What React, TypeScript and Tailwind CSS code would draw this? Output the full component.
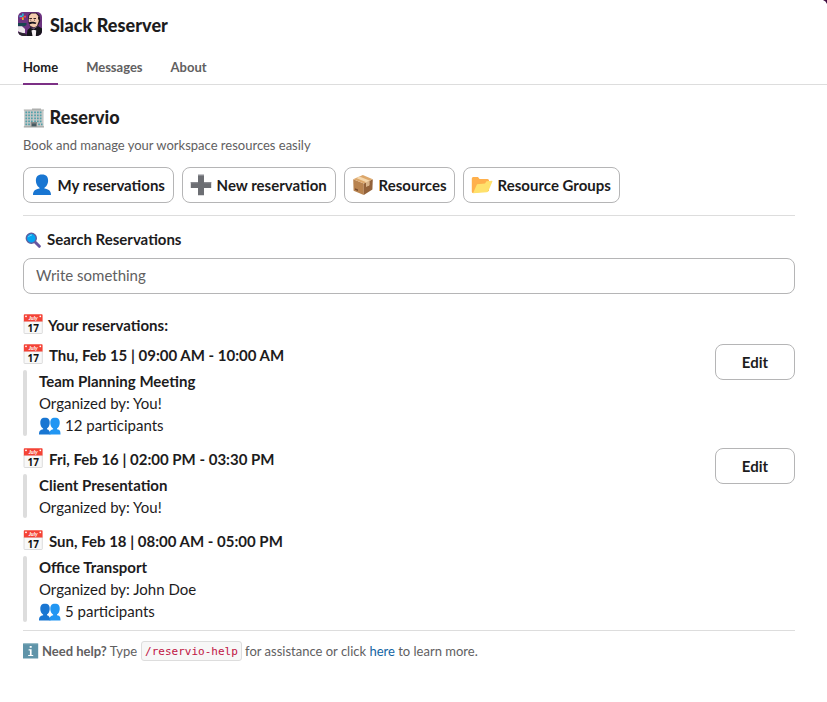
import type { ReactNode } from 'react'

function Calendar() {
  return (
    <svg viewBox="0 0 20 20" className="h-5 w-5 shrink-0">
      <path d="M1 7H19.300V18.800Q19.300 19.500 18.600 19.500H1.700Q1 19.500 1 18.800Z" fill="#f8f8f8" stroke="#cfcfcf" strokeWidth=".7" />
      <path d="M1.600 .3H18.800Q19.600 .3 19.600 1.100V7.600H.8V1.100Q.8 .3 1.600 .3Z" fill="#f44336" />
      <circle cx="3" cy="2.300" r=".9" fill="#fff" />
      <circle cx="17.300" cy="2.300" r=".9" fill="#fff" />
      <text x="10.200" y="5.800" textAnchor="middle" fontSize="5.4" fontWeight="700" fontStyle="italic" fill="#fff" fontFamily="Lato, sans-serif">July</text>
      <text x="10.200" y="17.500" textAnchor="middle" fontSize="11" fontWeight="700" fill="#111" fontFamily="Noto Sans, sans-serif" textLength="11.5" lengthAdjust="spacingAndGlyphs">17</text>
    </svg>
  )
}

function Person() {
  return (
    <svg viewBox="0 0 20 22" className="h-[22px] w-5 shrink-0">
      <path d="M1 21C1 16.500 3.500 15.200 7.600 14.500V12H12.400V14.500C16.500 15.200 19 16.500 19 21Z" fill="#1976d2" />
      <path d="M10 .5C14.500 .5 16.300 3.200 16.100 7C15.900 11 13.400 14.400 10 14.400S4.100 11 3.900 7C3.700 3.200 5.500 .5 10 .5Z" fill="#1976d2" />
    </svg>
  )
}

function People() {
  return (
    <svg viewBox="0 0 22 18" className="mt-[2px] h-[18px] w-[22px] shrink-0">
      <path d="M0 17.500C0 13.800 1.300 13 4.200 12.300V10H8V12.300Q11 13 11.500 17.500Z" fill="#1976d2" />
      <path d="M6 .7C9.500 .7 10.800 2.600 10.700 6S8.600 12 6 12S1.400 9.400 1.300 6S2.500 .7 6 .7Z" fill="#1976d2" />
      <path d="M10.500 17.500C10.500 13.800 11.600 13 14.200 12.300V10H18V12.300C21 13 21.500 13.800 21.500 17.500Z" fill="#2196f3" />
      <path d="M16 .7C19.500 .7 20.800 2.600 20.700 6S18.600 12 16 12S11.400 9.400 11.300 6S12.500 .7 16 .7Z" fill="#2196f3" />
    </svg>
  )
}

function Plus() {
  return (
    <svg viewBox="0 0 22 22" className="h-[22px] w-[22px] shrink-0">
      <path d="M8 .8H14V8H21.200V14H14V21.200H8V14H.8V8H8Z" fill="#6c6e73" />
      <path d="M8 .8H14V2H8ZM.8 8H8V9.200H.8ZM14 8H21.200V9.200H14Z" fill="#8b8d92" />
    </svg>
  )
}

function Box() {
  return (
    <svg viewBox="0 0 22 22" className="h-[22px] w-[22px] shrink-0">
      <path d="M1.200 5.300L11.800 9.500V21L1.600 16.700Z" fill="#b8834f" />
      <path d="M11.800 9.500L20.800 5.200L20.400 15.600L11.800 21Z" fill="#93623a" />
      <path d="M1.200 5.300L10.800 1L20.800 5.200L11.800 9.500Z" fill="#dca76b" />
      <path d="M4.200 3.900L7.500 2.500L17.300 6.500V11.200L14.200 12.700V8.300Z" fill="#f5d7ad" />
      <path d="M14.200 8.300L17.300 6.800V11.200L14.200 12.700Z" fill="#d8b38a" />
      <path d="M3 14.200L6 15.500V17L3 15.700Z" fill="#74482b" />
    </svg>
  )
}

function Folder() {
  return (
    <svg viewBox="0 0 22 18" className="h-[18px] w-[22px] shrink-0">
      <path d="M.8 2.500Q.8 1 2.200 1H7L8.500 3H16.500Q18 3 18 4.500V15L2 17Q.8 17 .8 15.500Z" fill="#ffb04c" />
      <path d="M6 8.300L14 7.500L15.500 5.300L21 4.800Q21.700 4.800 21.300 5.800L17.300 15.200Q16.800 16.200 15.700 16.200L2 17.200Z" fill="#ffe16c" />
    </svg>
  )
}

function Building() {
  return (
    <svg viewBox="0 0 22 20" className="h-5 w-[22px] shrink-0">
      <path d="M1.200 2H20.600V19H1.200Z" fill="#c6c8c7" />
      <path d="M9 .5H18V2H9ZM.8 1.500H21V2.600H.8Z" fill="#adafae" />
      <g fill="#4fa0a9">
        {[3.5, 6.5, 9.5, 12.5].map((y) =>
          [2.4, 5.2, 8, 11.2, 14, 16.8].map((x) => <path key={`${x}-${y}`} d={`M${x} ${y}h1.7v1.8h-1.7z`} />),
        )}
        <path d="M2.400 15.500h1.700v1.700h-1.700zM5.200 15.500h1.700v1.700h-1.700zM15.200 15.500h1.700v1.700h-1.700zM18 15.500h1.500v1.700h-1.500z" />
      </g>
      <path d="M7.800 14H14V19H7.800Z" fill="#858887" />
      <path d="M9 15.500H13V19H9Z" fill="#455b63" />
      <path d="M.8 18.300H21V19.500H.8Z" fill="#a0a4a3" />
    </svg>
  )
}

function Search() {
  return (
    <svg viewBox="0 0 16 16" className="h-4 w-4 shrink-0">
      <path d="M10.300 10.300L14.300 14.300" stroke="#6655a0" strokeWidth="3" strokeLinecap="round" />
      <circle cx="6.300" cy="6.300" r="5" fill="#03a5f1" stroke="#5f5f9f" strokeWidth="1.400" />
      <path d="M3.500 4.800Q4.500 3 6.500 3" fill="none" stroke="#7bd6ff" strokeWidth="1" strokeLinecap="round" />
    </svg>
  )
}

function Info() {
  return (
    <svg viewBox="0 0 16 16" className="h-4 w-4 shrink-0">
      <path d="M0 .5H15.200V15.500H0Z" fill="#5f94a9" />
      <path d="M.5 .5H14.700V1.300H.5Z" fill="#82aebc" />
      <path d="M6.700 2.900H8.700V4.700H6.700ZM5.600 6.300H8.600V12H10.200V13.100H5.200V12H6.900V7.400H5.600Z" fill="#fff" />
    </svg>
  )
}

function AppLogo() {
  return (
    <svg viewBox="0 0 24 24" className="h-6 w-6 rounded-[5px]">
      <path d="M0 0H24V24H0Z" fill="#6c3380" />
      <path d="M10 8L10.500 3L13 .8H18.500L21.500 3.500L22.300 9L20 14L16 16.200L12 14.500Z" fill="#2a1a26" />
      <path d="M10.700 8L11.300 3.500L13.500 1.500H18L20.200 4L20.500 7L21.500 8L20 11L19 14L16 15.500L12.500 14L11 11Z" fill="#f3cbad" />
      <path d="M20 5H22V10H20.800V7.500H20Z" fill="#2a1a26" />
      <path d="M11.300 6H14V6.900H11.300ZM15.500 6H18V6.900H15.500ZM12.200 7.700H13.200V8.500H12.200ZM16 7.700H17V8.500H16Z" fill="#3c2528" />
      <path d="M10.300 10.500L13 9.800H15.500L18.500 10.700L17.500 12L14.500 11.500L11.500 12.200Z" fill="#17131a" />
      <path d="M8.500 24L9.500 18L13 15L16 18L20 14L24 16.500V24Z" fill="#17151c" />
      <path d="M13 16L15.500 17L18.500 15L17.800 24H14.500Z" fill="#f4eff2" />
      <path d="M12 15.500L15.500 17L19 15V18.500L15.500 17.800L12 19Z" fill="#16151a" />
      <path d="M0 11H8.500V13L6.500 14.300H0Z" fill="#184450" />
      <path d="M0 14.300H4L7 17V21H3L0 19Z" fill="#eee7ec" />
      <path d="M0 20L3 20.500L8.500 22V24H0Z" fill="#2b2630" />
      <path d="M1.500 3.500H4V5.300H1.500Z" fill="#36c5f0" />
      <path d="M4 1.500H5.700V4.500H4Z" fill="#2db5cc" />
      <path d="M4 5.300H5.700V8H4Z" fill="#ecb22e" />
      <path d="M2 5.500H4V7H2Z" fill="#e01e5a" />
      <path d="M5.700 3.700H8V5.500H5.700Z" fill="#f24b45" />
    </svg>
  )
}

function ActionButton({ icon, label, width }: { icon: ReactNode; label: string; width: string }) {
  return (
    <button className={`flex h-9 items-center gap-1 rounded-lg border border-[#b5b5b6] pl-[7px] font-bold whitespace-nowrap ${width}`}>
      <span className="flex w-[22px] justify-center">{icon}</span>
      <span className="pl-[0.6px]">{label}</span>
    </button>
  )
}

interface Reservation {
  time: string
  title: string
  organizer: string
  participants?: number
  editable?: boolean
}

const reservations: Reservation[] = [
  { time: 'Thu, Feb 15 | 09:00 AM - 10:00 AM', title: 'Team Planning Meeting', organizer: 'You!', participants: 12, editable: true },
  { time: 'Fri, Feb 16 | 02:00 PM - 03:30 PM', title: 'Client Presentation', organizer: 'You!', editable: true },
  { time: 'Sun, Feb 18 | 08:00 AM - 05:00 PM', title: 'Office Transport', organizer: 'John Doe', participants: 5 },
]

function ReservationRow({ item }: { item: Reservation }) {
  return (
    <article className="flex items-start justify-between">
      <div>
        <div className="flex h-[26px] items-start gap-[6px]">
          <Calendar />
          <h3 className="font-bold">{item.time}</h3>
        </div>
        <div className="flex gap-3">
          <div className="w-1 rounded-full bg-[#dddddd]" />
          <div>
            <p className="font-bold">{item.title}</p>
            <p>Organized by: {item.organizer}</p>
            {item.participants && (
              <p className="flex items-center gap-1">
                <People />
                <span>{item.participants} participants</span>
              </p>
            )}
          </div>
        </div>
      </div>
      {item.editable && <button className="h-9 w-20 rounded-lg border border-[#b5b5b6] font-bold">Edit</button>}
    </article>
  )
}

export default function App() {
  return (
    <div className="relative h-[702px] w-full overflow-hidden bg-white font-['Lato',sans-serif] text-[15px] leading-[22px] text-[#1d1c1d]">
      <svg viewBox="0 0 4 4" className="absolute top-0 right-0 h-1 w-1">
        <path d="M0 0H4V4Q3 1 0 0Z" fill="#3f0e40" />
      </svg>
      <header className="flex h-12 items-center gap-2 pl-[18px]">
        <AppLogo />
        <h1 className="pt-px text-[18px] font-black tracking-[0.05px]">Slack Reserver</h1>
      </header>
      <nav className="flex h-[37px] gap-7 border-b border-[#dddddd] pl-[23px] text-[13px] font-bold text-[#616061]">
        <a className="-mb-px h-[37px] border-b-2 border-[#7c3085] pt-2 text-[#1d1c1d]">Home</a>
        <a className="pt-2">Messages</a>
        <a className="pt-2">About</a>
      </nav>
      <main className="w-[795px] pl-[23px]">
        <div className="flex h-[49px] items-center gap-1 pt-4">
          <Building />
          <h2 className="pb-[2px] pl-[0.5px] text-[18px] font-black tracking-[0.05px]">Reservio</h2>
        </div>
        <p className="h-[33px] text-[13px] text-[#616061]">Book and manage your workspace resources easily</p>
        <div className="flex gap-2">
          <ActionButton icon={<Person />} label="My reservations" width="w-[151px]" />
          <ActionButton icon={<Plus />} label="New reservation" width="w-[154px]" />
          <ActionButton icon={<Box />} label="Resources" width="w-[111px]" />
          <ActionButton icon={<Folder />} label="Resource Groups" width="w-[157px]" />
        </div>
        <hr className="mt-3 border-[#dddddd]" />
        <label className="mt-3 flex h-[30px] gap-[6px] pl-[2px] font-bold">
          <span className="pt-1"><Search /></span>
          Search Reservations
        </label>
        <input placeholder="Write something" className="h-9 w-full rounded-lg border border-[#b5b5b6] px-3 pb-[2px] placeholder:text-[#616061]" />
        <div className="mt-5 flex h-[30px] items-start gap-[5px]">
          <Calendar />
          <h2 className="font-bold">Your reservations:</h2>
        </div>
        <div className="flex flex-col gap-3">
          {reservations.map((item) => <ReservationRow key={item.time} item={item} />)}
        </div>
        <hr className="mt-2 border-[#dddddd]" />
        <footer className="mt-[9px] flex items-center text-[13px] text-[#616061]">
          <Info />
          <strong className="ml-[3px]">Need help?</strong>
          <span className="ml-[3px]">Type</span>
          <code className="mr-[3px] ml-[4px] w-[101px] rounded-[3px] border border-[#dddddd] bg-[#f7f7f7] px-[3px] pt-[2px] font-['DejaVu_Sans_Mono',monospace] text-[11px] leading-4 text-[#c01343]">/reservio-help</code>
          <span>for assistance or click <a className="text-[#1264a3]">here</a> to learn more.</span>
        </footer>
      </main>
    </div>
  )
}
